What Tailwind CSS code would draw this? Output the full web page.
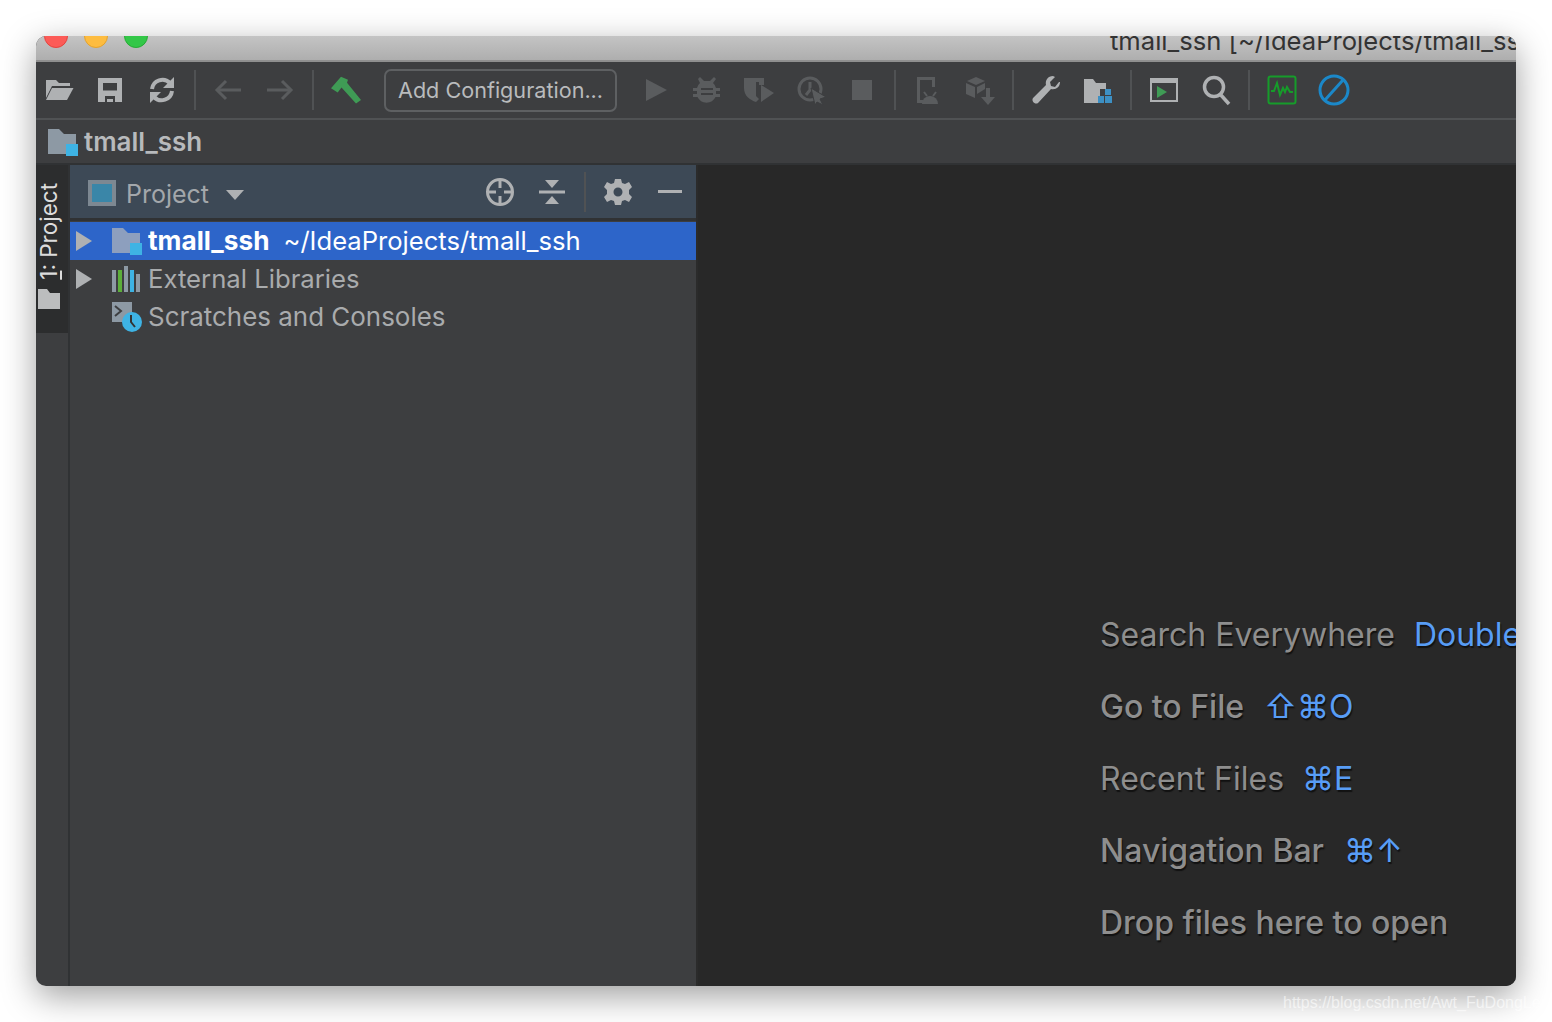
<!DOCTYPE html>
<html>
<head>
<meta charset="utf-8">
<title>tmall_ssh</title>
<script src="https://cdn.jsdelivr.net/npm/@tailwindcss/browser@4"></script>
</head>
<body class="bg-white">
<div class="relative w-[1552px] h-[1022px] overflow-hidden bg-white pt-[36px] pl-[36px] font-['Inter','DejaVu_Sans',sans-serif]">
  <!-- window -->
  <div class="w-[1480px] h-[950px] rounded-[10px] overflow-hidden flex flex-col bg-[#3d3e40] shadow-[0_10px_34px_rgba(0,0,0,0.38)]">

    <!-- title bar -->
    <div class="h-[26px] shrink-0 flex bg-gradient-to-b from-[#c4c4c4] to-[#aeaeae] border-b-2 border-[#8f8f8f] overflow-hidden">
      <div class="flex gap-[16px] pl-[8px] -mt-[12px] h-[24px]">
        <div class="w-[24px] h-[24px] rounded-full bg-[#fc5b57] border border-[#e3443f]"></div>
        <div class="w-[24px] h-[24px] rounded-full bg-[#fdbc40] border border-[#e2a22f]"></div>
        <div class="w-[24px] h-[24px] rounded-full bg-[#33c748] border border-[#27aa35]"></div>
      </div>
      <div class="ml-[962px] -mt-[11px] text-[25.6px] leading-[32px] text-[#333333] whitespace-nowrap">tmall_ssh [~/IdeaProjects/tmall_ssh]</div>
    </div>

    <!-- main toolbar -->
    <div class="h-[58px] shrink-0 flex items-center border-b-2 border-[#505254] -ml-[2px]">
      <div class="w-[50px] flex justify-center">
        <svg class="w-[32px] h-[32px]" viewBox="0 0 32 32" fill="#afb1b3"><path d="M3 24V6h10l3 3h11v3H9z"/><path d="M9 14h21.500L24 26H3z"/></svg>
      </div>
      <div class="w-[52px] flex justify-center">
        <svg class="w-[32px] h-[32px]" viewBox="0 0 32 32" fill="#afb1b3"><path fill-rule="evenodd" d="M4 4h24v24H4zM9 9v7.500h14V9zM11 22v6h10v-6z"/><path d="M13 25h6v3h-6z"/></svg>
      </div>
      <div class="w-[52px] flex justify-center">
        <svg class="w-[32px] h-[32px]" viewBox="0 0 32 32" fill="none" stroke="#afb1b3" stroke-width="4"><path d="M6 15a10.500 10.500 0 0 1 18-6"/><path d="M26 17a10.500 10.500 0 0 1-18 6"/><path d="M28 3v11H17z" fill="#afb1b3" stroke="none"/><path d="M4 29V18h11z" fill="#afb1b3" stroke="none"/></svg>
      </div>
      <div class="w-[2px] h-[40px] mx-[6px] bg-[#505254]"></div>
      <div class="w-[52px] flex justify-center">
        <svg class="w-[32px] h-[32px]" viewBox="0 0 32 32" fill="none" stroke="#5a5c5e" stroke-width="3"><path d="M29 16H5"/><path d="M14 7l-9 9 9 9"/></svg>
      </div>
      <div class="w-[52px] flex justify-center">
        <svg class="w-[32px] h-[32px]" viewBox="0 0 32 32" fill="none" stroke="#5a5c5e" stroke-width="3"><path d="M3 16h24"/><path d="M18 7l9 9-9 9"/></svg>
      </div>
      <div class="w-[2px] h-[40px] mx-[6px] bg-[#505254]"></div>
      <div class="w-[52px] flex justify-center">
        <svg class="w-[32px] h-[32px]" viewBox="0 0 32 32" fill="#3f9b55"><path d="M1 14.300L11 2.700l7 3-1 3 14 17.300-5 3.500-14.500-16-3.800 5z"/></svg>
      </div>
      <div class="ml-[12px] w-[233px] h-[43px] rounded-[7px] border-2 border-[#5e6062] flex items-center pl-[12px] text-[21.6px] text-[#b9bbbd] whitespace-nowrap">Add Configuration...</div>
      <div class="ml-[11px] w-[52px] flex justify-center">
        <svg class="w-[32px] h-[32px]" viewBox="0 0 32 32" fill="#5a5c5e"><path d="M8 5l21 11L8 27z"/></svg>
      </div>
      <div class="w-[52px] flex justify-center">
        <svg class="w-[32px] h-[32px] translate-x-[1px]" viewBox="0 0 32 32" fill="#5a5c5e"><path d="M9 3l4 4h6l4-4 2 2-3 4a9 9 0 0 1 3 5h4v3h-4v3h4v3h-4.500A10 10 0 0 1 6.500 23H2v-3h4v-3H2v-3h4a9 9 0 0 1 3-5L7 5z"/><path d="M10 14h12v2H10zM10 19h12v2H10z" fill="#3d3e40"/></svg>
      </div>
      <div class="w-[52px] flex justify-center">
        <svg class="w-[32px] h-[32px]" viewBox="0 0 32 32" fill="#5a5c5e"><path d="M2 4h20v4H14v14l3 3-3 3C8 26 2 22 2 14z"/><path d="M19 11l13 8-13 9z"/><path d="M17 8h5v3h-5z"/></svg>
      </div>
      <div class="w-[52px] flex justify-center">
        <svg class="w-[32px] h-[32px] translate-x-[2px]" viewBox="0 0 32 32" fill="none" stroke="#5a5c5e" stroke-width="3"><circle cx="14" cy="15" r="11"/><path d="M14 8v8l-4 5"/><path d="M15 14l15 9-6 2 3 6-6-3-2 3z" fill="#5a5c5e" stroke="#3d3e40" stroke-width="1"/></svg>
      </div>
      <div class="w-[52px] flex justify-center">
        <div class="w-[20px] h-[20px] bg-[#5a5c5e]"></div>
      </div>
      <div class="w-[2px] h-[40px] mx-[6px] bg-[#505254]"></div>
      <div class="w-[52px] flex justify-center">
        <svg class="w-[32px] h-[32px]" viewBox="0 0 32 32" fill="#5a5c5e"><path fill-rule="evenodd" d="M5 3h18v10h-3V6H8v20h3v3H5z"/><path d="M10 30a8 8 0 0 1 16 0z"/><path d="M12 18l3 4M24 18l-3 4" stroke="#5a5c5e" stroke-width="2"/></svg>
      </div>
      <div class="w-[52px] flex justify-center">
        <svg class="w-[32px] h-[32px]" viewBox="0 0 32 32" fill="#5a5c5e"><path d="M12 3l9 4-9 4-9-4z"/><path d="M2 9l9 4v11l-9-4z"/><path d="M13 13l8-4v6l-8 5z"/><path d="M22 14h4v9h5l-7 8-7-8h5z"/></svg>
      </div>
      <div class="w-[2px] h-[40px] mx-[6px] bg-[#505254]"></div>
      <div class="w-[52px] flex justify-center">
        <svg class="w-[32px] h-[32px]" viewBox="0 0 32 32" fill="#afb1b3"><path d="M30 8c0 5-4 8-9 7L8 29c-3 2-7-2-5-5l13-13c-1-5 2-9 7-9l2 1-5 5 1 4 4 1 4-5z"/></svg>
      </div>
      <div class="w-[52px] flex justify-center">
        <svg class="w-[32px] h-[32px]" viewBox="0 0 32 32"><path d="M2 5h9l3 4h10v6h-6v14H2z" fill="#afb1b3"/><path d="M23 15h6v6h-6zM16 22h6v7h-6zM23 22h7v7h-7z" fill="#3d90c4"/></svg>
      </div>
      <div class="w-[2px] h-[40px] mx-[6px] bg-[#505254]"></div>
      <div class="w-[52px] flex justify-center">
        <svg class="w-[32px] h-[32px]" viewBox="0 0 32 32"><path fill-rule="evenodd" d="M2 4h28v24H2zM4 9v17h24V9z" fill="#afb1b3"/><path d="M9 12l10 6-10 6z" fill="#3f9b55"/></svg>
      </div>
      <div class="w-[52px] flex justify-center">
        <svg class="w-[32px] h-[32px]" viewBox="0 0 32 32" fill="none" stroke="#afb1b3" stroke-width="3.500"><circle cx="14" cy="13" r="9.500"/><path d="M20 20l9 10"/></svg>
      </div>
      <div class="w-[2px] h-[40px] mx-[6px] bg-[#505254]"></div>
      <div class="w-[52px] flex justify-center">
        <svg class="w-[32px] h-[32px]" viewBox="0 0 32 32" fill="none" stroke="#169c2a" stroke-width="2"><rect x="2.500" y="2.500" width="27" height="27" rx="2"/><path d="M5 17h3l3-8 3 12 3-7 2 4 2-5 3 5h3"/></svg>
      </div>
      <div class="w-[52px] flex justify-center">
        <svg class="w-[32px] h-[32px]" viewBox="0 0 32 32" fill="none" stroke="#1b88c9" stroke-width="3"><circle cx="16" cy="16" r="14"/><path d="M7 26L25 6"/></svg>
      </div>
    </div>

    <!-- navigation bar -->
    <div class="h-[45px] shrink-0 flex items-center pl-[12px] border-b-2 border-[#303234]">
      <svg class="w-[30px] h-[30px] shrink-0" viewBox="0 0 30 30"><path d="M0 2h11l5 5h12v20H0z" fill="#8d99a4"/><path d="M18 17h12v12H18z" fill="#3eb3e4"/></svg>
      <div class="ml-[6px] text-[26px] font-semibold text-[#b8babc]">tmall_ssh</div>
    </div>

    <div class="flex-1 flex min-h-0">
      <!-- left tool strip -->
      <div class="w-[34px] shrink-0 border-r-2 border-[#303234]">
        <div class="h-[168px] bg-[#2c2d2e] flex flex-col items-center pt-[18px]">
          <div class="-ml-[7px] [writing-mode:vertical-rl] rotate-180 text-[22.5px] leading-[26px] text-[#dcdcdc] whitespace-nowrap"><span class="underline">1</span>: Project</div>
          <svg class="w-[22px] h-[20px] mt-[9px] -ml-[6px] shrink-0" viewBox="0 0 22 20" fill="#bcbdbe"><path d="M0 0h9l3 4h10v16H0z"/></svg>
        </div>
      </div>

      <!-- project panel -->
      <div class="w-[626px] shrink-0 flex flex-col">
        <div class="h-[56px] shrink-0 bg-[#3d4956] border-b-[3px] border-[#303234] flex items-center pl-[18px]">
          <div class="w-[28px] h-[26px] mt-[2px] bg-[#3a86a8] border-4 border-[#7d8892]"></div>
          <div class="ml-[10px] mt-[7px] text-[25px] text-[#a3a7ab]">Project</div>
          <svg class="w-[18px] h-[10px] ml-[17px] mt-[6px]" viewBox="0 0 18 10" fill="#afb1b3"><path d="M0 0h18L9 10z"/></svg>
          <div class="ml-auto flex items-center h-[40px]">
            <svg class="w-[30px] h-[30px] mr-[24px]" viewBox="0 0 30 30" fill="none" stroke="#afb1b3" stroke-width="3"><circle cx="15" cy="15" r="12.500"/><path d="M15 2v9M15 19v9M2 15h9M19 15h9"/></svg>
            <svg class="w-[26px] h-[26px] mr-[19px]" viewBox="0 0 26 26" fill="#afb1b3"><path d="M6 1h14l-7 8zM0 11.500h26v3H0zM13 17l7 8H6z"/></svg>
            <div class="w-[2px] h-[40px] bg-[#505254] mr-[18px]"></div>
            <svg class="w-[28px] h-[28px] mr-[26px]" viewBox="0 0 28 28" fill="#afb1b3"><path fill-rule="evenodd" d="M11 1h6l1 4 3 1 4-2 3 5-3 3v4l3 3-3 5-4-2-3 1-1 4h-6l-1-4-3-1-4 2-3-5 3-3v-4L0 9l3-5 4 2 3-1zM14 9.500a4.500 4.500 0 1 0 0 9 4.500 4.500 0 0 0 0-9z"/></svg>
            <div class="w-[24px] h-[3px] bg-[#afb1b3] mr-[14px]"></div>
          </div>
        </div>

        <div class="flex-1 pt-[1px]">
          <div class="h-[38px] flex items-center pl-[6px] bg-[#2d65c9] text-[25.6px] text-white whitespace-nowrap">
            <svg class="w-[16px] h-[20px] mr-[20px] shrink-0" viewBox="0 0 16 20" fill="#afb1b3"><path d="M0 0l16 10L0 20z"/></svg>
            <svg class="w-[30px] h-[30px] mr-[6px] shrink-0" viewBox="0 0 30 30"><path d="M0 2h11l5 5h12v20H0z" fill="#8d9fbe"/><path d="M18 17h12v12H18z" fill="#3eb3e4"/></svg>
            <span class="font-bold text-[26.2px]">tmall_ssh</span>
            <span class="ml-[14px]">~/IdeaProjects/tmall_ssh</span>
          </div>
          <div class="h-[38px] flex items-center pl-[6px] text-[25.7px] text-[#a9abad] whitespace-nowrap">
            <svg class="w-[16px] h-[20px] mr-[20px] shrink-0" viewBox="0 0 16 20" fill="#afb1b3"><path d="M0 0l16 10L0 20z"/></svg>
            <svg class="w-[30px] h-[26px] mr-[6px] shrink-0" viewBox="0 0 30 26"><path d="M0 4h4v22H0zM24 8h4v18h-4z" fill="#8d99a4"/><path d="M6 4h4v22H6z" fill="#5cae3a"/><path d="M12 0h4v26h-4z" fill="#8d99a4"/><path d="M18 4h4v22h-4z" fill="#3eb3e4"/></svg>
            <span>External Libraries</span>
          </div>
          <div class="h-[38px] flex items-center pl-[42px] text-[25.95px] text-[#a9abad] whitespace-nowrap">
            <svg class="w-[30px] h-[30px] mr-[6px] shrink-0" viewBox="0 0 30 30"><path d="M0 0h20v14l-8 6H0z" fill="#8d99a4"/><path d="M3 4l6 5-6 5" fill="none" stroke="#3d3e40" stroke-width="2"/><circle cx="20" cy="20" r="10" fill="#3eb3e4"/><path d="M19 13v7l4 5" fill="none" stroke="#333" stroke-width="2"/></svg>
            <span>Scratches and Consoles</span>
          </div>
        </div>
      </div>

      <!-- editor placeholder -->
      <div class="flex-1 min-w-0 bg-[#282828] border-l-2 border-[#2b2b2b] overflow-hidden flex flex-col gap-[32px] pt-[450px] pl-[402px] text-[32px] leading-[40px] whitespace-nowrap text-[#8e8e8e] [text-shadow:1px_2px_1px_#111]">
        <div class="font-normal">Search Everywhere<span class="ml-[19px] text-[#589df6]">Double Shift</span></div>
        <div class="font-[450]">Go to File<span class="ml-[20px] font-normal text-[#589df6]">⇧⌘O</span></div>
        <div class="font-normal">Recent Files<span class="ml-[18px] text-[#589df6]">⌘E</span></div>
        <div class="font-[450]">Navigation Bar<span class="ml-[20px] font-normal text-[#589df6]">⌘↑</span></div>
        <div class="font-[450]">Drop files here to open</div>
      </div>
    </div>
  </div>

  <!-- watermark over the window shadow -->
  <div class="absolute left-[1283px] top-[993px] text-[16px] leading-[20px] text-white/60 whitespace-nowrap font-['Liberation_Sans',sans-serif]">https://blog.csdn.net/Awt_FuDongLei</div>
</div>
</body>
</html>
